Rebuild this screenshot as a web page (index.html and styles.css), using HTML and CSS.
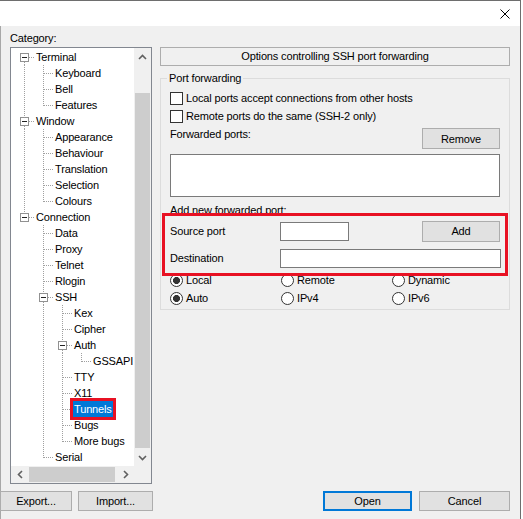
FILE: index.html
```html
<!DOCTYPE html>
<html>
<head>
<meta charset="utf-8">
<link rel="stylesheet" href="styles.css">
</head>
<body>
<div class="window">
  <div class="titlebar">
    <svg class="close" width="10" height="10" viewBox="0 0 10 10"><path d="M0.5 0.5 L9.5 9.5 M9.5 0.5 L0.5 9.5" stroke="#000" stroke-width="1" fill="none"/></svg>
  </div>
  <div class="client">
    <div class="main">
      <div class="left">
        <div class="cat-label">Category:</div>
        <div class="tree">
          <div class="items">
            <div class="row"><span class="c x xf"><span class="box"></span></span><span class="lbl">Terminal</span></div>
            <div class="row"><span class="c v"></span><span class="c t"></span><span class="lbl">Keyboard</span></div>
            <div class="row"><span class="c v"></span><span class="c t"></span><span class="lbl">Bell</span></div>
            <div class="row"><span class="c v"></span><span class="c l"></span><span class="lbl">Features</span></div>
            <div class="row"><span class="c x xm"><span class="box"></span></span><span class="lbl">Window</span></div>
            <div class="row"><span class="c v"></span><span class="c t"></span><span class="lbl">Appearance</span></div>
            <div class="row"><span class="c v"></span><span class="c t"></span><span class="lbl">Behaviour</span></div>
            <div class="row"><span class="c v"></span><span class="c t"></span><span class="lbl">Translation</span></div>
            <div class="row"><span class="c v"></span><span class="c t"></span><span class="lbl">Selection</span></div>
            <div class="row"><span class="c v"></span><span class="c l"></span><span class="lbl">Colours</span></div>
            <div class="row"><span class="c x xl"><span class="box"></span></span><span class="lbl">Connection</span></div>
            <div class="row"><span class="c"></span><span class="c t"></span><span class="lbl">Data</span></div>
            <div class="row"><span class="c"></span><span class="c t"></span><span class="lbl">Proxy</span></div>
            <div class="row"><span class="c"></span><span class="c t"></span><span class="lbl">Telnet</span></div>
            <div class="row"><span class="c"></span><span class="c t"></span><span class="lbl">Rlogin</span></div>
            <div class="row"><span class="c"></span><span class="c x xm"><span class="box"></span></span><span class="lbl">SSH</span></div>
            <div class="row"><span class="c"></span><span class="c v"></span><span class="c t"></span><span class="lbl">Kex</span></div>
            <div class="row"><span class="c"></span><span class="c v"></span><span class="c t"></span><span class="lbl">Cipher</span></div>
            <div class="row"><span class="c"></span><span class="c v"></span><span class="c x xm"><span class="box"></span></span><span class="lbl">Auth</span></div>
            <div class="row"><span class="c"></span><span class="c v"></span><span class="c v"></span><span class="c l"></span><span class="lbl">GSSAPI</span></div>
            <div class="row"><span class="c"></span><span class="c v"></span><span class="c t"></span><span class="lbl">TTY</span></div>
            <div class="row"><span class="c"></span><span class="c v"></span><span class="c t"></span><span class="lbl">X11</span></div>
            <div class="row sel"><span class="c"></span><span class="c v"></span><span class="c t"></span><span class="lbl">Tunnels</span></div>
            <div class="row"><span class="c"></span><span class="c v"></span><span class="c t"></span><span class="lbl">Bugs</span></div>
            <div class="row"><span class="c"></span><span class="c v"></span><span class="c l"></span><span class="lbl">More bugs</span></div>
            <div class="row"><span class="c"></span><span class="c l"></span><span class="lbl">Serial</span></div>
          </div>
          <div class="vscroll">
            <span class="sb-btn"><svg width="9" height="6" viewBox="0 0 9 6"><polyline points="1,5 4.5,1.5 8,5" fill="none" stroke="#606060" stroke-width="1.6"/></svg></span>
            <span class="vtrack"><span class="vthumb"></span></span>
            <span class="sb-btn"><svg width="9" height="6" viewBox="0 0 9 6"><polyline points="1,1 4.5,4.5 8,1" fill="none" stroke="#606060" stroke-width="1.6"/></svg></span>
          </div>
          <div class="hscroll">
            <span class="sb-btn"><svg width="6" height="9" viewBox="0 0 6 9"><polyline points="5,1 1.5,4.5 5,8" fill="none" stroke="#606060" stroke-width="1.6"/></svg></span>
            <span class="htrack"><span class="hthumb"></span></span>
            <span class="sb-btn"><svg width="6" height="9" viewBox="0 0 6 9"><polyline points="1,1 4.5,4.5 1,8" fill="none" stroke="#606060" stroke-width="1.6"/></svg></span>
          </div>
          <div class="corner"></div>
        </div>
      </div>
      <div class="right">
        <div class="header">Options controlling SSH port forwarding</div>
        <fieldset class="group">
          <legend>Port forwarding</legend>
          <div class="cb-row"><span class="cb"></span><span>Local ports accept connections from other hosts</span></div>
          <div class="cb-row"><span class="cb"></span><span>Remote ports do the same (SSH-2 only)</span></div>
          <div class="fwd-row"><span class="fwd-label">Forwarded ports:</span><button class="btn side-btn remove">Remove</button></div>
          <div class="listbox"></div>
          <div class="add-label">Add new forwarded port:</div>
          <div class="annot-wrap">
            <div class="frow"><span class="flabel">Source port</span><span class="field src"></span><button class="btn side-btn add">Add</button></div>
            <div class="frow dst-row"><span class="flabel">Destination</span><span class="field dst"></span></div>
            <div class="annot"></div>
          </div>
          <div class="radio-row first">
            <span class="radio on"><span class="dot"></span>Local</span>
            <span class="radio"><span class="dot"></span>Remote</span>
            <span class="radio"><span class="dot"></span>Dynamic</span>
          </div>
          <div class="radio-row">
            <span class="radio on"><span class="dot"></span>Auto</span>
            <span class="radio"><span class="dot"></span>IPv4</span>
            <span class="radio"><span class="dot"></span>IPv6</span>
          </div>
        </fieldset>
      </div>
    </div>
    <div class="footer">
      <div class="fl"><button class="btn export">Export...</button><button class="btn import">Import...</button></div>
      <div class="fr"><button class="btn open">Open</button><button class="btn cancel">Cancel</button></div>
    </div>
  </div>
</div>
</body>
</html>
```

FILE: styles.css
```css
* { box-sizing: border-box; }
html, body { margin: 0; padding: 0; background: #fff; }
body {
  font-family: "Liberation Sans", Arial, sans-serif;
  font-size: 11px;
  letter-spacing: -0.15px;
  color: #000;
  --dv: repeating-linear-gradient(to bottom, #a0a0a0 0 1px, transparent 1px 2px);
  --dh: repeating-linear-gradient(to right, #a0a0a0 0 1px, transparent 1px 2px);
}
.window {
  width: 521px;
  height: 519px;
  border-top: 1px solid #6e6e6e;
  border-right: 1px solid #6e6e6e;
  display: flex;
  flex-direction: column;
}
.titlebar {
  height: 25px;
  flex: none;
  background: #fff;
  display: flex;
  justify-content: flex-end;
  align-items: center;
  padding-right: 10px;
}
.close { display: block; }
.client {
  flex: 1;
  background: #f0f0f0;
  border-left: 1px solid #a8a8a8;
  padding: 0 10px 0 9px;
  display: flex;
  flex-direction: column;
}
.main {
  display: grid;
  grid-template-columns: 142px 350px;
  column-gap: 8px;
}
.cat-label {
  padding-top: 5px;
  line-height: 15px;
  margin-bottom: 1px;
}
.tree {
  height: 437px;
  border: 1px solid #828790;
  background: #fff;
  display: grid;
  grid-template-columns: 1fr 17px;
  grid-template-rows: 1fr 17px;
}
.items {
  overflow: hidden;
  padding: 1px 0 0 4px;
}
.row {
  display: flex;
  height: 16px;
  line-height: 16px;
  white-space: nowrap;
}
.c {
  width: 19px;
  height: 16px;
  flex: none;
  background-repeat: no-repeat;
}
.c.v {
  background-image: var(--dv);
  background-size: 1px 16px;
  background-position: 9px 0;
}
.c.t {
  background-image: var(--dv), var(--dh);
  background-size: 1px 16px, 9px 1px;
  background-position: 9px 0, 10px 8px;
}
.c.l {
  background-image: var(--dv), var(--dh);
  background-size: 1px 9px, 9px 1px;
  background-position: 9px 0, 10px 8px;
}
.c.xf {
  background-image: var(--dh), var(--dv);
  background-size: 5px 1px, 1px 3px;
  background-position: 14px 8px, 9px 13px;
}
.c.xm {
  background-image: var(--dh), var(--dv), var(--dv);
  background-size: 5px 1px, 1px 3px, 1px 4px;
  background-position: 14px 8px, 9px 13px, 9px 0;
}
.c.xl {
  background-image: var(--dh), var(--dv);
  background-size: 5px 1px, 1px 4px;
  background-position: 14px 8px, 9px 0;
}
.box {
  display: block;
  width: 9px;
  height: 9px;
  margin: 4px 0 0 5px;
  border: 1px solid #919191;
  background: linear-gradient(#222, #222) no-repeat 1px 3px / 5px 1px, #fff;
}
.lbl {
  margin-left: 1px;
  padding: 0 1px;
}
.sel .lbl {
  background: #0078d7;
  color: #fff;
  outline: 3px solid #e81123;
  outline-offset: 0;
}
.vscroll, .hscroll {
  background: #f0f0f0;
  display: flex;
}
.vscroll { flex-direction: column; }
.sb-btn {
  flex: none;
  width: 17px;
  height: 17px;
  display: flex;
  align-items: center;
  justify-content: center;
}
.vtrack { flex: 1; padding-top: 28px; }
.vthumb {
  display: block;
  height: 355px;
  margin: 0 1px;
  background: #cdcdcd;
}
.htrack { flex: 1; padding-top: 1px; }
.hthumb {
  display: block;
  width: 86px;
  height: 15px;
  margin-left: 1px;
  background: #cdcdcd;
}
.corner { background: #f0f0f0; }
.right { padding-top: 21px; }
.header {
  height: 19px;
  line-height: 17px;
  border: 1px solid #adadad;
  text-align: center;
}
.group {
  margin: 5px 0 0 0;
  min-width: 0;
  border: 1px solid #dcdcdc;
  padding: 3px 9px 2px 9px;
}
.group legend {
  padding: 0 2px;
  margin-left: -3px;
  line-height: 15px;
}
.cb-row {
  height: 18px;
  display: flex;
  align-items: center;
}
.cb {
  width: 13px;
  height: 13px;
  border: 1px solid #333;
  background: #fff;
  margin-right: 3px;
  flex: none;
}
.fwd-row {
  height: 24px;
  display: flex;
  justify-content: space-between;
  align-items: flex-start;
}
.fwd-label { margin-top: 2px; line-height: 15px; }
.btn {
  font: inherit;
  letter-spacing: inherit;
  color: #000;
  background: #e1e1e1;
  border: 1px solid #adadad;
  padding: 0;
  margin: 0;
  height: 20px;
}
.side-btn { width: 78px; height: 21px; }
.remove { margin-top: 3px; }
.listbox {
  margin-top: 5px;
  height: 43px;
  border: 1px solid #7a7a7a;
  background: #fff;
}
.add-label { margin-top: 6px; line-height: 15px; }
.annot-wrap {
  position: relative;
  margin-top: 1px;
}
.frow {
  height: 24px;
  display: flex;
  align-items: center;
}
.dst-row { margin-top: 3px; }
.flabel { width: 110px; flex: none; }
.field {
  height: 19px;
  border: 1px solid #7a7a7a;
  background: #fff;
  flex: none;
}
.src { width: 69px; }
.dst { width: 221px; }
.add { margin-left: auto; }
.annot {
  position: absolute;
  top: -6px;
  left: -8px;
  right: -8px;
  bottom: -6px;
  border: 3px solid #e81123;
  pointer-events: none;
  z-index: 2;
}
.radio-row {
  height: 18px;
  display: grid;
  grid-template-columns: 111px 111px 1fr;
  align-items: center;
}
.radio-row.first { margin-top: 1px; }
.radio { display: flex; align-items: center; }
.dot {
  width: 13px;
  height: 13px;
  border: 1px solid #333;
  border-radius: 50%;
  background: #fff;
  margin-right: 3px;
  flex: none;
}
.radio.on .dot {
  background: radial-gradient(circle, #333 0 3.2px, #fff 3.8px);
}
.footer {
  margin-top: 7px;
  display: flex;
  justify-content: space-between;
}
.fl, .fr { display: flex; }
.fl { margin-left: -10px; gap: 6px; }
.fr { gap: 7px; }
.export { width: 72px; }
.import { width: 75px; }
.open { width: 89px; border: 2px solid #0078d7; }
.cancel { width: 91px; }
```
